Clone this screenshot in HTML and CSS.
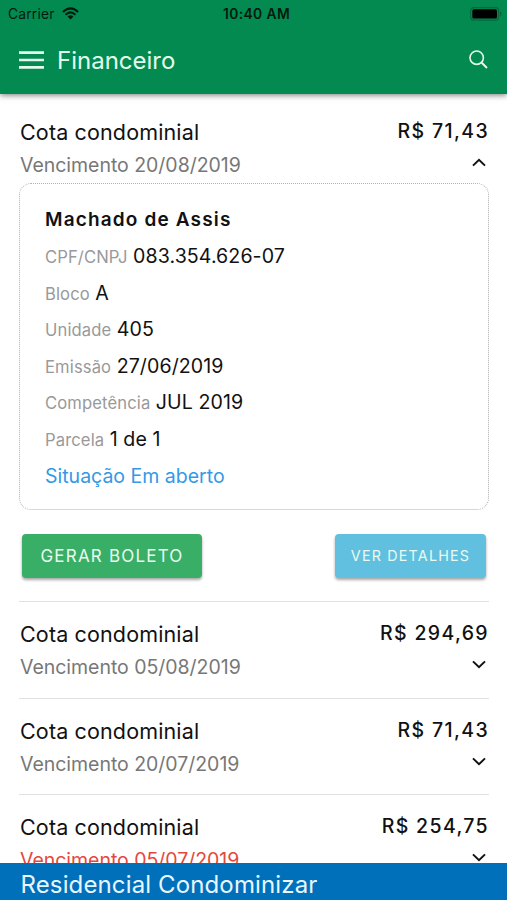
FILE: index.html
```html
<!DOCTYPE html>
<html lang="pt-BR">
<head>
<meta charset="utf-8">
<title>Financeiro</title>
<link rel="stylesheet" href="styles.css">
</head>
<body>
<div class="app">
  <header class="header">
    <div class="status">
      <span class="carrier">Carrier
        <svg class="wifi" viewBox="0 0 18 13"><path d="M1 4.9Q9-2.6 17 4.9M3.8 7.8Q9 3 14.2 7.8" fill="none" stroke="#001a0d" stroke-width="2.3"/><path d="M5.9 9.7Q9 7.2 12.1 9.7L9 12.8Z" fill="#001a0d"/></svg>
      </span>
      <span class="time">10:40 AM</span>
      <svg class="battery" viewBox="0 0 32 14"><rect x=".6" y=".6" width="28" height="12.6" rx="3.4" fill="none" stroke="#04693b" stroke-width="1.2"/><rect x="2.3" y="2.3" width="24.7" height="9.2" rx="1.6" fill="#000"/><path d="M30 4.8Q31.6 5.4 31.6 7T30 9.2Z" fill="#04693b"/></svg>
    </div>
    <div class="toolbar">
      <svg class="menu" viewBox="0 0 24 17"><path d="M0 1.4H24M0 8.5H24M0 15.6H24" stroke="#e3fbee" stroke-width="2.6"/></svg>
      <h1 class="heading">Financeiro</h1>
      <svg class="search" viewBox="0 0 19 19"><circle cx="7.7" cy="7.7" r="6.7" fill="none" stroke="#e3fbee" stroke-width="1.6"/><path d="M12.5 12.5L18 18" stroke="#e3fbee" stroke-width="2"/></svg>
    </div>
  </header>

  <main class="list">
    <section class="item item-open">
      <div class="row"><span class="title">Cota condominial</span><span class="price">R$ 71,43</span></div>
      <div class="row sub"><span class="due">Vencimento 20/08/2019</span><svg class="chevron" viewBox="0 0 14 9"><path d="M1 7.6L7 1.8L13 7.6" /></svg></div>
      <div class="card">
        <div class="name">Machado de Assis</div>
        <div class="field"><span class="label">CPF/CNPJ</span><span class="value">083.354.626-07</span></div>
        <div class="field"><span class="label">Bloco</span><span class="value">A</span></div>
        <div class="field"><span class="label">Unidade</span><span class="value">405</span></div>
        <div class="field"><span class="label">Emissão</span><span class="value">27/06/2019</span></div>
        <div class="field"><span class="label">Competência</span><span class="value">JUL 2019</span></div>
        <div class="field"><span class="label">Parcela</span><span class="value">1 de 1</span></div>
        <div class="field"><span class="state">Situação Em aberto</span></div>
      </div>
      <div class="actions">
        <button class="btn primary">GERAR BOLETO</button>
        <button class="btn info">VER DETALHES</button>
      </div>
    </section>
    <section class="item">
      <div class="row"><span class="title">Cota condominial</span><span class="price">R$ 294,69</span></div>
      <div class="row sub"><span class="due">Vencimento 05/08/2019</span><svg class="chevron" viewBox="0 0 14 9"><path d="M1 1.4L7 7.2L13 1.4" /></svg></div>
    </section>
    <section class="item">
      <div class="row"><span class="title">Cota condominial</span><span class="price">R$ 71,43</span></div>
      <div class="row sub"><span class="due">Vencimento 20/07/2019</span><svg class="chevron" viewBox="0 0 14 9"><path d="M1 1.4L7 7.2L13 1.4" /></svg></div>
    </section>
    <section class="item">
      <div class="row"><span class="title">Cota condominial</span><span class="price">R$ 254,75</span></div>
      <div class="row sub"><span class="due late">Vencimento 05/07/2019</span><svg class="chevron" viewBox="0 0 14 9"><path d="M1 1.4L7 7.2L13 1.4" /></svg></div>
    </section>
  </main>

  <footer class="footer">Residencial Condominizar</footer>
</div>
</body>
</html>
```

FILE: styles.css
```css
* { box-sizing: border-box; }
body {
  margin: 0;
  font-family: Inter, "Liberation Sans", sans-serif;
  color: #111;
  background: #fff;
}
.app {
  display: flex;
  flex-direction: column;
  height: 900px;
  overflow: hidden;
}
.header {
  flex: none;
  height: 94px;
  background: #038a50;
  box-shadow: 0 1px 6px rgba(0, 0, 0, .55);
  z-index: 1;
}
.status {
  display: grid;
  grid-template-columns: 1fr auto 1fr;
  align-items: center;
  height: 27px;
  padding: 0 5px 0 8px;
  color: #001a0d;
}
.carrier {
  display: flex;
  align-items: center;
  gap: 7px;
  font-size: 13.8px;
  letter-spacing: .2px;
}
.wifi { width: 17px; height: 13px; }
.time {
  margin-left: 3px;
  font-size: 13.8px;
  font-weight: 600;
  letter-spacing: .4px;
}
.battery { width: 32px; height: 14px; justify-self: end; }
.toolbar {
  display: flex;
  align-items: center;
  height: 66px;
  padding: 0 19.5px 0 19px;
  color: #e3fbee;
}
.menu { width: 25px; height: 18px; }
.heading {
  flex: 1;
  margin: 2px 0 0 13px;
  font-size: 24px;
  font-weight: 400;
  line-height: 30px;
}
.search { width: 19px; height: 19px; margin-bottom: 2px; }
.list {
  flex: 1;
  min-height: 0;
  overflow: hidden;
  padding: 8.5px 18px 0 19px;
}
.item {
  height: 96.5px;
  padding-top: 17px;
  border-bottom: 1.5px solid #e2e2e2;
}
.item-open { height: 499.5px; padding-top: 14px; }
.row {
  display: flex;
  justify-content: space-between;
  align-items: flex-start;
  height: 34px;
  padding-left: 1px;
  line-height: 30px;
}
.sub { height: 32px; line-height: 29px; }
.title { font-size: 21.5px; letter-spacing: .14px; }
.price {
  font-size: 19.5px;
  font-weight: 500;
  letter-spacing: 1.35px;
  line-height: 29px;
}
.due { font-size: 19.5px; letter-spacing: -.03px; color: #777; }
.late { color: #e5473c; }
.chevron {
  width: 14px;
  height: 9px;
  margin: 7px 3px 0 0;
  fill: none;
  stroke: #111;
  stroke-width: 2;
}
.card {
  height: 327px;
  padding: 18px 25px 0;
  border: 1.5px dotted #b0b0b0;
  border-radius: 12px;
}
.name {
  height: 36.6px;
  font-size: 19px;
  font-weight: 600;
  line-height: 36.6px;
  letter-spacing: 1.15px;
}
.field {
  display: flex;
  align-items: baseline;
  gap: 5.5px;
  height: 36.6px;
  line-height: 36.6px;
}
.label { font-size: 16.6px; letter-spacing: .12px; color: #999; }
.value { font-size: 19.6px; letter-spacing: .08px; }
.state { font-size: 19.5px; color: #3399e6; }
.actions {
  display: flex;
  justify-content: space-between;
  padding: 24px 3px 0;
}
.btn {
  height: 44px;
  padding: 0;
  border: 0;
  border-radius: 4px;
  box-shadow: 0 2px 3px rgba(0, 0, 0, .35);
  color: #e9fbf0;
  font-family: inherit;
  text-align: center;
}
.primary { width: 180px; background: #38ae66; font-size: 17px; letter-spacing: 1.2px; }
.info { width: 151px; background: #61c0df; font-size: 14.3px; letter-spacing: 1.2px; }
.footer {
  flex: none;
  height: 37px;
  padding-left: 20.5px;
  background: #0070bb;
  color: #e8f6ff;
  font-size: 24px;
  letter-spacing: .13px;
  line-height: 43px;
  z-index: 1;
}
```
